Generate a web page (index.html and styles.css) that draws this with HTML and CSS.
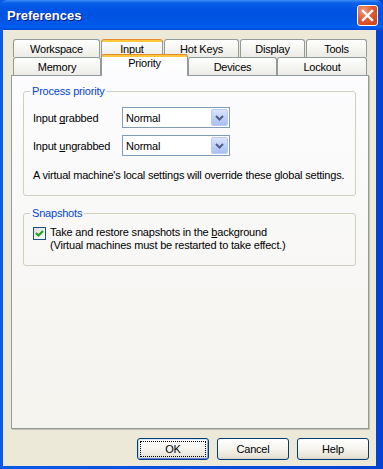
FILE: index.html
```html
<!DOCTYPE html>
<html lang="en">
<head>
<meta charset="UTF-8">
<title>Preferences</title>
<link rel="stylesheet" href="styles.css">
</head>
<body>
<div class="window">
  <div class="titlebar">
    <span class="title">Preferences</span>
    <button class="close-btn" aria-label="Close">
      <svg width="13" height="13" viewBox="0 0 13 13"><path d="M2 2 L11 11 M11 2 L2 11" stroke="#fff" stroke-width="2.4" stroke-linecap="square"/></svg>
    </button>
  </div>

  <div class="client">
    <div class="tabs">
      <div class="tab-row">
        <div class="tab tab-workspace">Workspace</div>
        <div class="tab tab-input hot">Input</div>
        <div class="tab tab-hotkeys">Hot Keys</div>
        <div class="tab tab-display">Display</div>
        <div class="tab tab-tools">Tools</div>
      </div>
      <div class="tab-row front">
        <div class="tab tab-memory">Memory</div>
        <div class="tab tab-priority selected">Priority</div>
        <div class="tab tab-devices">Devices</div>
        <div class="tab tab-lockout">Lockout</div>
      </div>
    </div>

    <div class="panel">
      <fieldset class="group">
        <legend>Process priority</legend>
        <div class="field-row first">
          <label class="field-label">Input <u>g</u>rabbed</label>
          <div class="combo">
            <span class="combo-text">Normal</span>
            <span class="combo-btn">
              <svg width="9" height="6" viewBox="0 0 9 6"><path d="M1 1 L4.5 4.5 L8 1" fill="none" stroke="#4d6185" stroke-width="2"/></svg>
            </span>
          </div>
        </div>
        <div class="field-row">
          <label class="field-label">Input <u>u</u>ngrabbed</label>
          <div class="combo">
            <span class="combo-text">Normal</span>
            <span class="combo-btn">
              <svg width="9" height="6" viewBox="0 0 9 6"><path d="M1 1 L4.5 4.5 L8 1" fill="none" stroke="#4d6185" stroke-width="2"/></svg>
            </span>
          </div>
        </div>
        <p class="note">A virtual machine's local settings will override these global settings.</p>
      </fieldset>

      <fieldset class="group snapshots">
        <legend>Snapshots</legend>
        <div class="check-row">
          <span class="checkbox">
            <svg width="11" height="11" viewBox="0 0 11 11"><path d="M2 5 L4.5 7.5 L9 3" fill="none" stroke="#21a121" stroke-width="2.2"/></svg>
          </span>
          <div class="check-text">
            Take and restore snapshots in the <u>b</u>ackground<br>
            (Virtual machines must be restarted to take effect.)
          </div>
        </div>
      </fieldset>
    </div>

    <div class="buttons">
      <button class="btn default"><span class="focus">OK</span></button>
      <button class="btn">Cancel</button>
      <button class="btn">Help</button>
    </div>
  </div>
</div>
</body>
</html>
```

FILE: styles.css
```css
body {
  margin: 0;
  font-family: "Liberation Sans", Arial, sans-serif;
  font-size: 11px;
  letter-spacing: -0.2px;
  color: #000;
}
u {
  text-decoration-skip-ink: none;
}
.window {
  width: 383px;
  height: 469px;
  display: flex;
  flex-direction: column;
  background: linear-gradient(to right, #0a5ae6 0, #0a5ae6 3px, #0342d2 100%);
}

/* title bar */
.titlebar {
  height: 30px;
  display: flex;
  align-items: center;
  padding: 0 5px 0 7px;
  background: linear-gradient(to bottom, #3c8cf8 0, #0a5fe8 3px, #0055e5 8px, #0052e0 16px, #0058ea 24px, #0060f0 27px, #0048d8 30px);
  border-radius: 7px 7px 0 0;
}
.title {
  flex: 1;
  font-family: "Liberation Sans", Arial, sans-serif;
  font-weight: bold;
  font-size: 13px;
  letter-spacing: 0;
  color: #fff;
  text-shadow: 1px 1px 0 #0a1883;
  padding-top: 1px;
}
.close-btn {
  width: 21px;
  height: 21px;
  margin-top: 1px;
  padding: 0;
  border: 1px solid #fff;
  border-radius: 3px;
  background: radial-gradient(circle at 30% 25%, #f09c80 0, #e15a32 45%, #c7401a 100%);
  display: flex;
  align-items: center;
  justify-content: center;
}

/* client area */
.client {
  flex: 1;
  margin: 0 7px 3px 3px;
  background: #ece9d8;
  display: flex;
  flex-direction: column;
  padding: 9px 7px 6px 8px;
}

/* tabs */
.tabs {
  padding-left: 2px;
}
.tab-row {
  display: flex;
  height: 18px;
}
.tab {
  box-sizing: border-box;
  height: 18px;
  margin-right: 1px;
  padding-top: 3px;
  line-height: 13px;
  text-align: center;
  border: 1px solid #919b9c;
  border-bottom: none;
  border-radius: 3px 3px 0 0;
  background: linear-gradient(to bottom, #fff 0, #f7f7f4 40%, #ecebe6 100%);
}
.tab.hot {
  border-top-color: #e68b2c;
  background: linear-gradient(to bottom, #ffc73c 0, #ffc73c 2px, #fff 2px, #f7f7f4 40%, #ecebe6 100%);
}
.tab-row.front .tab {
  margin-right: 0;
}
.tab-workspace { width: 87px; }
.tab-input { width: 62px; }
.tab-hotkeys { width: 75px; }
.tab-display { width: 65px; }
.tab-tools { width: 61px; }
.tab-memory { width: 88px; }
.tab-priority { width: 87px; }
.tab-devices { width: 89px; }
.tab-lockout { width: 90px; }
.tab.selected {
  position: relative;
  z-index: 2;
  height: 22px;
  margin-top: -3px;
  padding-top: 2px;
  border-top-color: #e68b2c;
  background: linear-gradient(to bottom, #ffc73c 0, #ffc73c 2px, #fff 2px, #fcfcfe 100%);
}

/* panel */
.panel {
  flex: 1;
  border: 1px solid #919b9c;
  background: linear-gradient(to bottom, #fcfcfe 0, #f4f3ee 100%);
  box-shadow: 1px 1px 0 #c5c2b2;
  padding: 9px 12px 0 11px;
}
.group {
  margin: 0;
  padding: 0 8px 13px 9px;
  border: 1px solid #d0d0bf;
  border-radius: 3px;
  min-width: 0;
}
.group legend {
  padding: 0 2px;
  margin-left: -3px;
  line-height: 13px;
  color: #0046d5;
}
.snapshots {
  margin-top: 11px;
}
.field-row {
  display: flex;
  align-items: center;
  height: 21px;
  margin-top: 7px;
}
.field-row.first {
  margin-top: 9px;
}
.field-label {
  width: 89px;
}
.combo {
  box-sizing: border-box;
  width: 108px;
  height: 21px;
  border: 1px solid #7f9db9;
  background: #fff;
  display: flex;
  align-items: center;
  padding: 1px 1px 1px 3px;
}
.combo-text {
  flex: 1;
}
.combo-btn {
  box-sizing: border-box;
  width: 17px;
  height: 17px;
  border: 1px solid #bbcbf5;
  border-radius: 2px;
  background: linear-gradient(to bottom, #d9e4fd 0, #bccdf8 60%, #aac0f4 100%);
  display: flex;
  align-items: center;
  justify-content: center;
}
.note {
  margin: 13px 0 0;
  line-height: 13px;
  white-space: nowrap;
}
.check-row {
  display: flex;
  align-items: flex-start;
  margin-top: 6px;
}
.checkbox {
  box-sizing: border-box;
  width: 13px;
  height: 13px;
  margin-top: 1px;
  margin-right: 4px;
  border: 1px solid #1c5180;
  background: linear-gradient(135deg, #dcdcd7 0, #fff 100%);
  display: flex;
  align-items: center;
  justify-content: center;
}
.check-text {
  line-height: 13px;
}

/* dialog buttons */
.buttons {
  display: flex;
  justify-content: flex-end;
  gap: 8px;
  margin-top: 9px;
}
.btn {
  box-sizing: border-box;
  width: 72px;
  height: 22px;
  padding: 0;
  border: 1px solid #003c74;
  border-radius: 3px;
  background: linear-gradient(to bottom, #fff 0, #f5f4ee 50%, #e6e3d6 90%, #d6d0c5 100%);
  font-family: "Liberation Sans", Arial, sans-serif;
  font-size: 11px;
  letter-spacing: -0.2px;
  color: #000;
}
.btn.default {
  box-shadow: inset 0 1px 0 #cee7ff, inset 1px 0 0 #bcd4f6, inset -1px 0 0 #89ade4, inset 0 -1px 0 #6982ee;
  padding: 2px;
}
.btn .focus {
  display: block;
  height: 100%;
  box-sizing: border-box;
  border: 1px dotted #000;
  line-height: 14px;
}
```
